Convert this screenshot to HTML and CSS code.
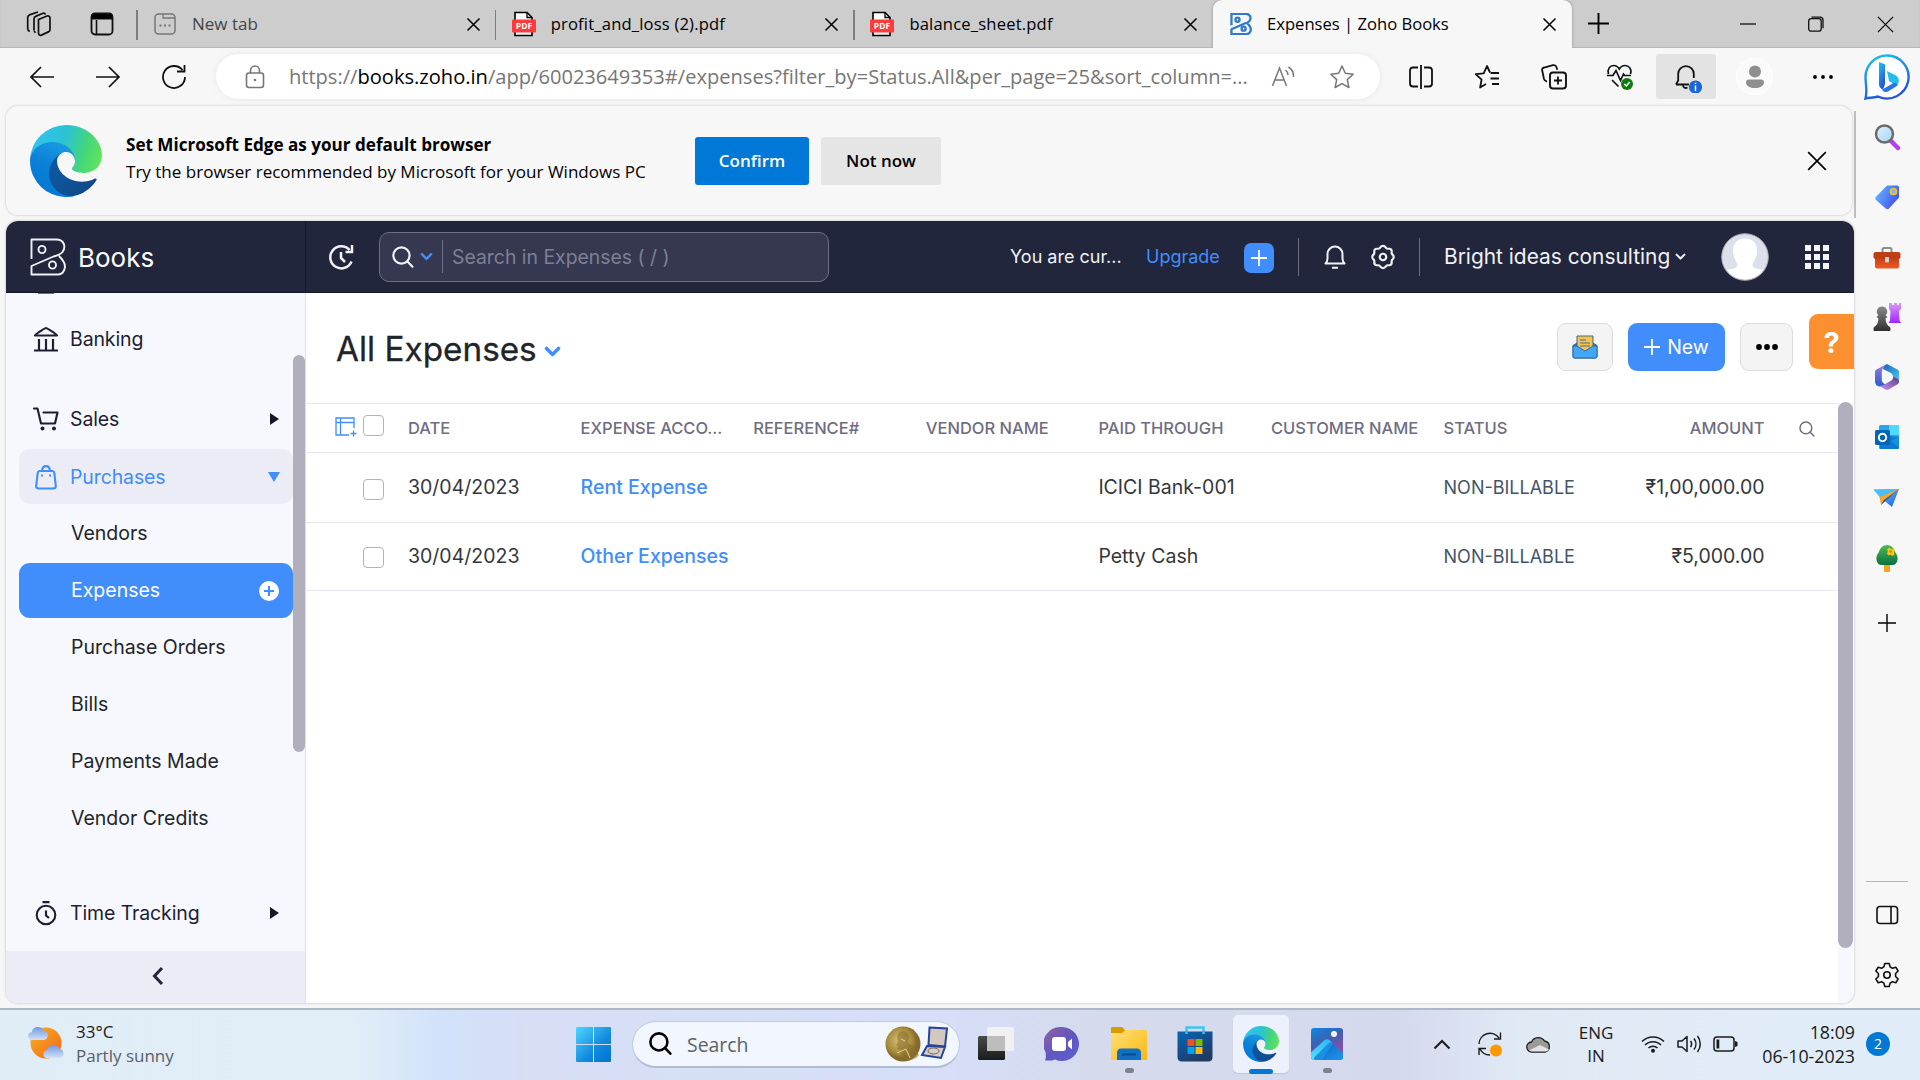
FILE: index.html
```html
<!DOCTYPE html>
<html lang="en">
<head>
<meta charset="utf-8">
<title>Expenses | Zoho Books</title>
<link rel="stylesheet" href="styles.css">
</head>
<body>
<svg class="sprite" width="0" height="0" aria-hidden="true">
  <defs>
    <linearGradient id="edgeDark" x1="0.2" y1="0" x2="1" y2="0.5"><stop offset="0" stop-color="#0c59a4"/><stop offset="1" stop-color="#114a8b"/></linearGradient>
    <linearGradient id="edgeBlue" x1="0.6" y1="0" x2="0.2" y2="1"><stop offset="0" stop-color="#1b9de2"/><stop offset=".5" stop-color="#0b7fd6"/><stop offset="1" stop-color="#0078d4"/></linearGradient>
    <linearGradient id="edgeTop" x1="0" y1="0.4" x2="1" y2="0.6"><stop offset="0" stop-color="#35c1f1"/><stop offset=".45" stop-color="#2bc3d2"/><stop offset=".75" stop-color="#44d57c"/><stop offset="1" stop-color="#60e45c"/></linearGradient>
    <linearGradient id="win" x1="0" y1="0" x2="1" y2="1"><stop offset="0" stop-color="#50d6ff"/><stop offset=".6" stop-color="#118adf"/><stop offset="1" stop-color="#0073d0"/></linearGradient>
    <linearGradient id="bing" x1="0" y1="0" x2=".4" y2="1"><stop offset="0" stop-color="#1fc4f4"/><stop offset="1" stop-color="#2355d8"/></linearGradient>
    <linearGradient id="tagG" x1="0" y1="0.3" x2="1" y2="0.8"><stop offset="0" stop-color="#66b5fb"/><stop offset="1" stop-color="#3d45f5"/></linearGradient>
    <linearGradient id="box" x1="0" y1="0" x2="0" y2="1"><stop offset="0" stop-color="#c43d12"/><stop offset="1" stop-color="#ee5a24"/></linearGradient>
    <linearGradient id="pawn" x1="0" y1="0" x2="0" y2="1"><stop offset="0" stop-color="#8a8a8a"/><stop offset="1" stop-color="#2f2f2f"/></linearGradient>
    <linearGradient id="rook" x1="0" y1="0" x2="0" y2="1"><stop offset="0" stop-color="#d39bf7"/><stop offset="1" stop-color="#a621ff"/></linearGradient>
    <linearGradient id="mA" x1="0" y1="0" x2="0" y2="1"><stop offset="0" stop-color="#9d7be0"/><stop offset="1" stop-color="#2a5fc8"/></linearGradient>
    <linearGradient id="mB" x1="0" y1="0" x2="1" y2="1"><stop offset="0" stop-color="#1b63b8"/><stop offset="1" stop-color="#4cc9f2"/></linearGradient>
    <linearGradient id="mC" x1="0" y1="1" x2="1" y2="0"><stop offset="0" stop-color="#cf96ec"/><stop offset="1" stop-color="#5b3790"/></linearGradient>
    <linearGradient id="plane" x1="0" y1="0" x2="1" y2="1"><stop offset="0" stop-color="#56c7f8"/><stop offset="1" stop-color="#2467e0"/></linearGradient>
    <linearGradient id="leaf" x1="0" y1="0" x2="0" y2="1"><stop offset="0" stop-color="#4dbb4f"/><stop offset="1" stop-color="#0b6f43"/></linearGradient>
    <linearGradient id="sun" x1="0" y1="0" x2="1" y2="1"><stop offset="0" stop-color="#f0b32c"/><stop offset="1" stop-color="#f8640c"/></linearGradient>
    <linearGradient id="cloud" x1="0" y1="0" x2="0" y2="1"><stop offset="0" stop-color="#6f97e0"/><stop offset="1" stop-color="#d3e1f7"/></linearGradient>
    <linearGradient id="chat" x1="0" y1="0" x2="1" y2="1"><stop offset="0" stop-color="#93629f"/><stop offset=".5" stop-color="#6257c0"/><stop offset="1" stop-color="#5a5fd8"/></linearGradient>
    <linearGradient id="folder" x1="0" y1="0" x2="1" y2="1"><stop offset="0" stop-color="#ffe07a"/><stop offset="1" stop-color="#fbb80f"/></linearGradient>
    <linearGradient id="store" x1="0" y1="0" x2=".6" y2="1"><stop offset="0" stop-color="#0966b9"/><stop offset="1" stop-color="#1f3a63"/></linearGradient>
    <linearGradient id="photo" x1=".2" y1="0" x2=".6" y2=".8"><stop offset="0" stop-color="#1183da"/><stop offset=".5" stop-color="#3f5fb2"/><stop offset="1" stop-color="#8a4fa5"/></linearGradient>
    <linearGradient id="hill" x1="0" y1="1" x2="1" y2="0"><stop offset="0" stop-color="#4fe0ff"/><stop offset="1" stop-color="#29b4f2"/></linearGradient>
    <linearGradient id="slope" x1="0" y1="0" x2="1" y2="1"><stop offset="0" stop-color="#0a5fb8"/><stop offset="1" stop-color="#1c98f0"/></linearGradient>
    <linearGradient id="dark" x1="0" y1="0" x2="0" y2="1"><stop offset="0" stop-color="#4a4a4a"/><stop offset="1" stop-color="#1b1b1b"/></linearGradient>
    <radialGradient id="gold" cx=".4" cy=".4"><stop offset="0" stop-color="#d9c27b"/><stop offset=".7" stop-color="#a98c3d"/><stop offset="1" stop-color="#86692a"/></radialGradient>
    <linearGradient id="lens" x1="0" y1="0" x2="1" y2="1"><stop offset="0" stop-color="#e6f4fc"/><stop offset="1" stop-color="#9fd2f3"/></linearGradient>
  </defs>
  <symbol id="edge" viewBox="0 0 256 256">
    <path fill="url(#edgeDark)" d="M231 190.5c-3.4 1.8-6.9 3.4-10.5 4.7a101.8 101.8 0 01-35.9 6.4c-47.3 0-88.5-32.5-88.5-74.3.1-11.4 6.4-21.9 16.4-27.3-42.8 1.8-53.8 46.4-53.8 72.5 0 74 68.1 81.4 82.8 81.4 7.9 0 19.8-2.3 27-4.6l1.3-.4a128.3 128.3 0 0066.6-52.8 4 4 0 00-5.4-5.6z"/>
    <path fill="url(#edgeBlue)" d="M105.7 241.4a79.2 79.2 0 01-22.7-21.3 80.7 80.7 0 0129.5-120c3.2-1.5 8.5-4.1 15.6-4a32.4 32.4 0 0125.7 13 31.9 31.9 0 016.3 18.7c0-.2 24.5-79.6-80-79.6-43.9 0-80 41.6-80 78.2a130.2 130.2 0 0012.1 56 128 128 0 00156.4 67 75.5 75.5 0 01-62.8-8z"/>
    <path fill="url(#edgeTop)" d="M152.3 148.9c-.9 1-3.4 2.5-3.4 5.6 0 2.6 1.7 5.2 4.8 7.3 14.3 10 41.4 8.6 41.5 8.6a59.6 59.6 0 0030.3-8.3 61.4 61.4 0 0030.4-52.9c.3-22.4-8-37.3-11.3-43.9C223.5 23.9 177.7 0 128 0A128 128 0 000 126.2c.5-36.5 36.8-66 80-66 3.5 0 23.5.3 42 10a72.6 72.6 0 0130.9 29.3c6.1 10.6 7.2 24.1 7.2 29.5s-2.7 13.3-7.8 19.9z"/>
  </symbol>
  <symbol id="x" viewBox="0 0 20 20"><path d="M2 2l16 16M18 2L2 18" fill="none" stroke="currentColor"/></symbol>
  <symbol id="plus" viewBox="0 0 20 20"><path d="M10 0v20M0 10h20" fill="none" stroke="currentColor"/></symbol>
  <symbol id="chev" viewBox="0 0 14 10"><path d="M2 2l5 5 5-5" fill="none" stroke="currentColor" stroke-linecap="round" stroke-linejoin="round"/></symbol>
  <symbol id="mag" viewBox="0 0 20 20"><circle cx="8.6" cy="8.6" r="7.4" fill="none" stroke="currentColor"/><path d="M14 14l4.6 4.8" fill="none" stroke="currentColor" stroke-linecap="round"/></symbol>
  <symbol id="zb" viewBox="0 0 36 38"><path d="M1.5 21V1.5h25c7 0 10 6.500 6 12.500-2 2.500-5 3.500-9 4.500L1.500 28v8.500h26c7 0 9-8 6-13-1.200-2.200-2.600-3.700-4.500-5.500" fill="none" stroke="currentColor" stroke-linejoin="round"/><ellipse cx="12" cy="11.500" rx="3.500" ry="3.600" fill="none" stroke="currentColor"/><ellipse cx="22.500" cy="27" rx="3.500" ry="3.600" fill="none" stroke="currentColor"/></symbol>
  <symbol id="gearz" viewBox="0 0 24 24"><path d="M12 1.800c1.800 0 2.200 1 3 2s2 .4 3.200.6c1.600.4 2 1.600 1.800 3-.2 1.200 0 1.800 1 2.600 1.200 1.100 1.200 2.900 0 4-1 .8-1.200 1.400-1 2.600.2 1.400-.2 2.600-1.800 3-1.200.2-2.400-.4-3.200.6s-1.200 2-3 2-2.200-1-3-2-2-.4-3.200-.6c-1.600-.4-2-1.600-1.800-3 .2-1.200 0-1.800-1-2.600-1.200-1.100-1.200-2.900 0-4 1-.8 1.200-1.400 1-2.600-.2-1.400.2-2.600 1.800-3C7 4.200 8.200 4.800 9 3.800s1.200-2 3-2z" fill="none" stroke="currentColor" stroke-linejoin="round"/><circle cx="12" cy="12" r="3" fill="none" stroke="currentColor"/></symbol>
  <symbol id="cloudS" viewBox="0 0 24 18"><path d="M5 17a4.500 4.500 0 01-.6-9 7 7 0 0113.400-1.600A5.400 5.400 0 0118.500 17z" fill="url(#cloud)"/></symbol>
</svg>

<header class="tabs">
  <div class="tabs-lead">
    <svg width="26" height="26" viewBox="0 0 26 26" class="line"><path d="M12.500 8.500l8.500-3.500c1.500-.5 3 .3 3 2v11.500c0 1-.6 2-1.600 2.400l-7 3.200c-1.500.6-2.900-.3-2.900-2zM8 19.500V8c0-1.200.6-2.200 1.700-2.600L17 2.300M3.800 20.500C2.300 20 1.700 19 1.700 17.600V6.400c0-1.200.6-2 1.700-2.500L12 1M8 20l1.500 1.800M17 2.300c1.200-.3 2 .2 2.500 1.200" stroke-width="1.700"/></svg>
    <svg width="24" height="24" viewBox="0 0 24 24" class="line"><rect x="1.500" y="1.500" width="21" height="21" rx="3.500" stroke-width="1.800"/><path d="M2 2h20v5H2z" fill="#000"/><path d="M6.500 8v14" stroke-width="1.600"/></svg>
  </div>
  <div class="tab tab-muted">
    <svg width="22" height="22" viewBox="0 0 22 22" class="line"><rect x="1" y="1" width="20" height="20" rx="3.500" stroke-width="1.500"/><path d="M9 1v4h12" stroke-width="1.300"/><path d="M5.500 12.500h2m2.500 0h2m2.500 0h2" stroke-width="2"/></svg>
    <span class="tab-title">New tab</span><svg class="tab-x" width="15" height="15"><use href="#x"/></svg>
  </div>
  <div class="tab tab-file"><svg width="24" height="26" viewBox="0 0 24 26"><path d="M3 1.500h12l5 5v18H3z" fill="#fff" stroke="#000" stroke-width="1.600"/><path d="M15 1.500v5h5" fill="none" stroke="#000" stroke-width="1.300"/><rect y="8.500" width="24" height="13" rx="1" fill="#ff3b3b"/><text x="12" y="18.200" class="pdf-label">PDF</text></svg><span class="tab-title">profit_and_loss (2).pdf</span><svg class="tab-x" width="15" height="15"><use href="#x"/></svg></div>
  <div class="tab tab-file"><svg width="24" height="26" viewBox="0 0 24 26"><path d="M3 1.500h12l5 5v18H3z" fill="#fff" stroke="#000" stroke-width="1.600"/><path d="M15 1.500v5h5" fill="none" stroke="#000" stroke-width="1.300"/><rect y="8.500" width="24" height="13" rx="1" fill="#ff3b3b"/><text x="12" y="18.200" class="pdf-label">PDF</text></svg><span class="tab-title">balance_sheet.pdf</span><svg class="tab-x" width="15" height="15"><use href="#x"/></svg></div>
  <div class="tab tab-active"><svg width="22" height="22" class="zb-blue"><use href="#zb"/></svg><span class="tab-title">Expenses | Zoho Books</span><svg class="tab-x" width="15" height="15"><use href="#x"/></svg></div>
  <svg class="tab-new" width="21" height="21"><use href="#plus"/></svg>
  <div class="win-controls">
    <svg width="16" height="16" viewBox="0 0 16 16" class="line"><path d="M0 8h16" stroke-width="1.300"/></svg>
    <svg width="16" height="16" viewBox="0 0 16 16" class="line"><rect x=".7" y="2.700" width="12.500" height="12.500" rx="2.500" stroke-width="1.300"/><path d="M3.500 1.200h8.500c1.800 0 3 1.200 3 3v8" stroke-width="1.300"/></svg>
    <svg width="19" height="19" class="thin"><use href="#x"/></svg>
  </div>
</header>

<nav class="toolbar">
  <div class="cell"><svg width="26" height="24" viewBox="0 0 26 24" class="line"><path d="M25 12H2M12 2L2 12l10 10" stroke-width="1.700"/></svg></div>
  <div class="cell"><svg width="26" height="24" viewBox="0 0 26 24" class="line"><path d="M1 12h23M14 2l10 10-10 10" stroke-width="1.700"/></svg></div>
  <div class="cell cell-refresh"><svg width="26" height="26" viewBox="0 0 26 26" class="line"><path d="M24 13A11 11 0 1 1 21.500 6M23.500 1v6.500H16" stroke-width="1.800"/></svg></div>
  <div class="address">
    <svg width="20" height="24" viewBox="0 0 20 24" class="line grey"><rect x="1.500" y="8" width="17" height="14.500" rx="2.500" stroke-width="1.600"/><path d="M5.500 8V5.500a4.500 4.500 0 019 0V8" stroke-width="1.600"/><circle cx="10" cy="15" r="1.300" fill="#767676" stroke="none"/></svg>
    <span class="url">https://<b>books.zoho.in</b>/app/60023649353#/expenses?filter_by=Status.All&amp;per_page=25&amp;sort_column=...</span>
    <svg class="read" width="25" height="24" viewBox="0 0 25 24"><path d="M1.500 21L8.500 3l7 18M4 15h9M14.500 5a6 6 0 012.500 5M17.500 2a11 11 0 015 10" fill="none" stroke="#767676" stroke-width="1.500"/></svg>
    <svg width="26" height="26" viewBox="0 0 26 26" class="line grey"><path d="M13 2l3.300 7.300 7.900.9-5.900 5.400 1.600 7.900L13 19.600l-6.900 3.900 1.600-7.900-5.900-5.400 7.900-.9z" stroke-width="1.500" stroke-linejoin="round"/></svg>
  </div>
  <div class="cell"><svg width="26" height="26" viewBox="0 0 26 26" class="line"><path d="M10 3.500H5C3 3.500 2 4.500 2 6.500v13c0 2 1 3 3 3h5M16 3.500h5c2 0 3 1 3 3v13c0 2-1 3-3 3h-5M13 1v24" stroke-width="1.800"/></svg></div>
  <div class="cell"><svg width="26" height="26" viewBox="0 0 26 26" class="line"><path d="M16 8.500L13 2 9.700 9.300l-8 .9 5.900 5.400-1.500 7.900L12 20M16.500 9H25M16.500 14.500H25M18 20h7" stroke-width="1.800" stroke-linejoin="round"/></svg></div>
  <div class="cell"><svg width="26" height="26" viewBox="0 0 26 26" class="line"><rect x="9" y="8.500" width="16" height="16" rx="3" stroke-width="1.900"/><path d="M17 12.500v8M13 16.500h8M6 17.500c-2-.3-2.500-1-3-2.500L1.200 6.500c-.4-1.500.5-2.700 2-3L12 1.200c1.500-.3 3 .3 3.500 2l.8 2.500" stroke-width="1.800"/></svg></div>
  <div class="cell"><svg width="28" height="28" viewBox="0 0 28 28" class="line"><path d="M2.500 11C1 6 4 2.500 7.500 2.500c2.500 0 4.500 1.200 5.800 3.500 1.300-2.300 3.300-3.500 5.800-3.500C23 2.500 26 6 24.500 11M1 12.500h6l3-5 4.500 10 3-6.500 1.200 1.500H25M6 17l6.500 6.500" stroke-width="1.700"/><circle cx="21" cy="21" r="6" fill="#0f7b0f" stroke="none"/><path d="M18.300 21l2 2 3.500-4" stroke="#fff" stroke-width="1.500"/></svg></div>
  <div class="cell cell-on"><svg width="30" height="30" viewBox="0 0 30 30" class="line"><path d="M3 21.500l2.200-4V11a7.800 7.800 0 0115.600 0v4M3 21.500h13M10 22c0 3 2.500 3.500 4.500 2.500" stroke-width="1.800"/><circle cx="22.500" cy="24" r="6.600" fill="#1a66d4" stroke="none"/><path d="M22.500 22.500v5.500M22.500 19.800v1.300" stroke="#fff" stroke-width="1.500"/></svg></div>
  <div class="cell cell-wide"><span class="profile"><svg width="20" height="24" viewBox="0 0 20 24"><circle cx="10" cy="6.500" r="6" fill="#8f8f8f"/><path d="M4 14.500h12a3 3 0 013 3c0 3.500-4 5.500-9 5.500s-9-2-9-5.500a3 3 0 013-3z" fill="#8f8f8f"/></svg></span></div>
  <div class="cell cell-wide"><svg width="22" height="6" viewBox="0 0 22 6"><circle cx="3" cy="3" r="1.900"/><circle cx="11" cy="3" r="1.900"/><circle cx="19" cy="3" r="1.900"/></svg></div>
  <div class="cell bing"><svg width="46" height="46" viewBox="0 0 46 46"><path d="M23 1.500a21.500 21.500 0 11-9 41C9 44 5 43.500 1.500 44.500 3.500 37 1.500 30 1.500 23A21.500 21.500 0 0123 1.500z" fill="#fff" stroke="url(#bing)" stroke-width="2.400"/><path d="M15 8l6 2.500V30l-2 5.500c-2.500-1-4-2.500-4-5.500z" fill="url(#bing)"/><path d="M23 17l9 4.500c4 3 3.500 8 0 11l-9 5c-2 1-4 .5-5-1.500l11-6.500-4-2.500z" fill="#1fc0ea"/><path d="M18.500 35.500l12-7 3.500 2.500-10 6.500c-2 1-4 .5-5.500-2z" fill="#2b74e6"/></svg></div>
</nav>

<div class="workspace">
  <div class="page">
    <section class="infobar">
      <svg width="72" height="72"><use href="#edge"/></svg>
      <div class="info-text"><strong>Set Microsoft Edge as your default browser</strong><span>Try the browser recommended by Microsoft for your Windows PC</span></div>
      <button class="btn-confirm"><span>Confirm</span></button><button class="btn-later"><span>Not now</span></button>
      <svg class="info-x" width="22" height="22"><use href="#x"/></svg>
    </section>

    <main class="app">
      <div class="app-bar">
        <div class="brand"><svg width="36" height="38"><use href="#zb"/></svg><span>Books</span></div>
        <svg class="history" width="26" height="26" viewBox="0 0 26 26"><path d="M23.500 17.500A11 11 0 1 1 21.500 6M24 1v7h-6.500M13 8v6l4 4" fill="none" stroke="currentColor" stroke-width="2.500"/></svg>
        <div class="search">
          <svg width="22" height="22" class="s-mag"><use href="#mag"/></svg><svg width="13" height="10" class="s-chev"><use href="#chev"/></svg>
          <span class="search-hint">Search in Expenses ( / )</span>
        </div>
        <span class="trial">You are cur...</span><a class="upgrade">Upgrade</a>
        <span class="quick-add"><svg width="16" height="16"><use href="#plus"/></svg></span>
        <i class="rule rule-a"></i>
        <svg class="bell" width="22" height="26" viewBox="0 0 22 26"><path d="M1.500 19.500c1.500-1.500 2-3 2-5V10a7.500 7.500 0 0115 0v4.500c0 2 .5 3.500 2 5zM8 23.800h6" fill="none" stroke="currentColor" stroke-width="2" stroke-linejoin="round"/></svg>
        <svg class="gear" width="26" height="26"><use href="#gearz"/></svg>
        <i class="rule rule-b"></i>
        <span class="org">Bright ideas consulting</span><svg class="org-chev" width="11" height="8"><use href="#chev"/></svg>
        <svg class="avatar" width="48" height="48" viewBox="0 0 48 48"><circle cx="24" cy="24" r="23.300" fill="#dde0ec" stroke="#a9a9a9"/><path d="M24 5.500c8 0 12 5 12 12.500 0 6-2.500 9-4 12-1 3 0 5 3 5.500 3.500.6 5 .8 7 1.500A22.500 22.500 0 0124 46.500 22.500 22.500 0 016 37c2-.7 3.500-.9 7-1.500 3-.5 4-2.500 3-5.500-1.500-3-4-6-4-12 0-7.500 4-12.500 12-12.500z" fill="#fff"/></svg>
        <svg class="apps" width="24" height="24" viewBox="0 0 24 24"><path d="M0 0h6v6H0zM9 0h6v6H9zM18 0h6v6h-6zM0 9h6v6H0zM9 9h6v6H9zM18 9h6v6h-6zM0 18h6v6H0zM9 18h6v6H9zM18 18h6v6h-6z" fill="#f4f4f6"/></svg>
      </div>

      <div class="app-body">
        <aside class="side">
          <div class="side-list">
            <i class="side-cut"></i>
            <div class="item banking"><svg width="26" height="26" viewBox="0 0 26 26"><path d="M2 9.500c0-1 10-7.500 11-7.500s11 6.500 11 7.500zM1 24.500h24M6 13v11M13 13v11M20 13v11" fill="none" stroke="currentColor" stroke-width="2.200" stroke-linejoin="round"/></svg><span>Banking</span></div>
            <div class="item sales"><svg width="26" height="24" viewBox="0 0 26 24"><path d="M1 1.500h3.500L8 16.500h14l2.500-11H10.500" fill="none" stroke="currentColor" stroke-width="2.100" stroke-linejoin="round" stroke-linecap="round"/><circle cx="9.500" cy="21.500" r="2"/><circle cx="21" cy="21.500" r="2"/></svg><span>Sales</span><i class="tri"></i></div>
            <div class="item purchases"><svg width="24" height="26" viewBox="0 0 24 26"><path d="M5.500 7h13c1.300 0 1.600 1 1.800 2l1.500 13c.1 1.500-.8 2.500-2.300 2.500h-15C3 24.500 2.100 23.500 2.200 22L3.700 9c.2-1 .5-2 1.800-2zM8 7c.5-6.500 7.500-6.500 8 0" fill="none" stroke="currentColor" stroke-width="2.100"/><path d="M8 10.500v2M16 10.500v2" stroke="currentColor" stroke-width="2"/></svg><span>Purchases</span><i class="tri tri-down"></i></div>
            <div class="sub">Vendors</div>
            <div class="sub sub-on"><span>Expenses</span><svg width="20" height="20" viewBox="0 0 20 20"><circle cx="10" cy="10" r="10" fill="#fff"/><path d="M10 5v10M5 10h10" stroke="#408dfb" stroke-width="2"/></svg></div>
            <div class="sub">Purchase Orders</div>
            <div class="sub">Bills</div>
            <div class="sub">Payments Made</div>
            <div class="sub">Vendor Credits</div>
            <div class="item time"><svg width="24" height="26" viewBox="0 0 24 26"><circle cx="12" cy="15" r="9.300" fill="none" stroke="currentColor" stroke-width="2.100"/><path d="M8.500 2.200h7M12 10.500v5l3 2.500" fill="none" stroke="currentColor" stroke-width="2.200"/></svg><span>Time Tracking</span><i class="tri"></i></div>
          </div>
          <i class="side-thumb"></i>
          <div class="side-foot"><svg width="12" height="20" viewBox="0 0 12 20"><path d="M10 2L2.500 10l7.500 8" fill="none" stroke="currentColor" stroke-width="3"/></svg></div>
        </aside>

        <section class="content">
          <div class="head">
            <h1>All Expenses</h1><svg class="h-chev" width="17" height="12"><use href="#chev"/></svg>
            <span class="hbtn inbox"><svg width="26" height="24" viewBox="0 0 26 24"><path d="M1 10.500l4-2.500h16l4 2.500v11c0 1-.6 1.500-1.500 1.500h-21C1.600 23 1 22.500 1 21.500z" fill="#2f86cf" stroke="#24618f" stroke-width=".9"/><path d="M5 1h16v12l-8 4-8-4z" fill="#f8c24b" stroke="#24618f" stroke-width=".9"/><path d="M8 5h6M8 8h10M8 11h10" stroke="#7c8a8c" stroke-width="1.300"/><path d="M1 11h4l8 5 8-5h4v10.500c0 1-.6 1.500-1.500 1.500h-21C1.600 23 1 22.500 1 21.500z" fill="#43a7f7" stroke="#24618f" stroke-width=".9"/></svg></span>
            <span class="hbtn new"><svg width="16" height="16"><use href="#plus"/></svg>New</span>
            <span class="hbtn more"><svg width="22" height="6" viewBox="0 0 22 6"><circle cx="3" cy="3" r="2.900"/><circle cx="11" cy="3" r="2.900"/><circle cx="19" cy="3" r="2.900"/></svg></span>
            <span class="help">?</span>
          </div>
          <div class="scroll">
            <div class="table">
              <div class="row row-head">
                <span class="pick"><svg width="22" height="20" viewBox="0 0 22 20"><path d="M14 18H1V1h18v10M1 5.500h18M5.500 1v17M18.500 13.500v6M15.500 16.500h6" fill="none" stroke="#408dfb" stroke-width="1.300"/></svg><i class="check"></i></span>
                <span>DATE</span><span>EXPENSE ACCO...</span><span>REFERENCE#</span><span>VENDOR NAME</span><span>PAID THROUGH</span><span>CUSTOMER NAME</span>
                <span>STATUS</span><span class="num">AMOUNT</span><svg width="16" height="16" class="th-mag"><use href="#mag"/></svg>
              </div>
              <div class="row row-a"><span class="pick"><i class="check"></i></span><span>30/04/2023</span><a>Rent Expense</a><span></span><span></span><span class="thru">ICICI Bank-001</span><span></span><span class="state">NON-BILLABLE</span><span class="num">₹1,00,000.00</span></div>
              <div class="row row-b"><span class="pick"><i class="check"></i></span><span>30/04/2023</span><a>Other Expenses</a><span></span><span></span><span class="thru">Petty Cash</span><span></span><span class="state">NON-BILLABLE</span><span class="num">₹5,000.00</span></div>
            </div>
            <div class="track"><i></i></div>
          </div>
        </section>
      </div>
    </main>
  </div>

  <aside class="edge-side">
    <svg viewBox="0 0 30 30"><path d="M19 19l7 7" stroke="#b43df5" stroke-width="4.500" stroke-linecap="round"/><circle cx="12.500" cy="12" r="8.500" fill="url(#lens)" stroke="#6b6b6b" stroke-width="2.500"/></svg>
    <svg viewBox="0 0 30 30"><path d="M15 3.500h10c1.500 0 2 .8 2 2v10L17 26.500c-1 1-2.300 1-3.300 0L4 18c-1-1-1-2.300 0-3.300z" fill="url(#tagG)"/><circle cx="21.500" cy="9.500" r="3" fill="#7fb2ff" stroke="#f7c30d" stroke-width="1.700"/></svg>
    <svg viewBox="0 0 30 30"><path d="M10.500 10V7.500c0-1 .7-1.500 1.500-1.500h6c.8 0 1.500.5 1.500 1.500V10" fill="none" stroke="#8d8d8d" stroke-width="2"/><rect x="3" y="15" width="24" height="11.500" rx="2" fill="url(#box)"/><rect x="1.500" y="10" width="27" height="7" rx="2" fill="#bd3f15"/><rect x="13" y="15" width="4" height="5.500" rx="1" fill="#cfd4da"/></svg>
    <svg viewBox="0 0 30 30"><path d="M17 1h3v2h2V1h3v2h2V1h2v6l-2 2 .5 9.500 1.500 2.500H16.500l1.500-2.500.5-9.500-1.500-2z" fill="url(#rook)"/><path d="M10 4.500a5 5 0 013.500 8.700l2 1.800-2 1.500c.3 3 .9 5.500 3 7.500 2 1 2 1.500 2 3.500 0 1-.6 1.500-1.500 1.500H3c-.9 0-1.500-.5-1.500-1.500 0-2 0-2.500 2-3.500 2.100-2 2.700-4.500 3-7.500l-2-1.500 2-1.800A5 5 0 0110 4.500z" fill="url(#pawn)"/></svg>
    <svg viewBox="0 0 30 30"><path d="M15 2L4.500 7.500C3.500 8 3 9 3 10v9.500c0 4 4.500 6 7.500 4.500l3-1.500c-3.500-2-3.700-3-3.700-6.500V10C9.800 6.500 12 4 15 2z" fill="url(#mA)"/><path d="M15 2l10.500 5.500C26.500 8 27 9 27 10v9.500L21 15c0-2-1-3.500-3-4.500L11 7c.5-2.500 2-4 4-5z" fill="url(#mB)"/><path d="M27 19.500c0 1.500-.5 2-1.500 2.800L17 27.200c-1.500.8-2.500.8-4 0l-6-3.400c2 .3 3.500 0 5-1l7-4c1.500-1 2-2 2-3.800 4 1 6 2 6 4.500z" fill="url(#mC)"/><path d="M15 10.500l4.300 2.300v4.600L15 19.700l-4.300-2.300v-4.600z" fill="#f7f7f7"/></svg>
    <svg viewBox="0 0 30 30"><rect x="7" y="3" width="20" height="24" rx="1.500" fill="#28a8ea"/><path d="M17 3h8.500c.8 0 1.500.6 1.500 1.500V13H17z" fill="#50d9ff"/><path d="M8 13l19 2v10.500c0 .8-.7 1.500-1.500 1.500H8z" fill="#0f78d4"/><path d="M19 19l8-4.500v11z" fill="#1490df"/><rect x="3" y="8" width="15" height="15" rx="1.500" fill="#0364b8"/><circle cx="10.500" cy="15.500" r="3.700" fill="none" stroke="#fff" stroke-width="2"/></svg>
    <svg viewBox="0 0 30 30"><path d="M1.500 6.500L27 6 20 24l-5-4z" fill="url(#plane)"/><path d="M1.500 6.500L27 6 8.500 15z" fill="#4abdf5"/><path d="M27 6L9 22l-1.500-8z" fill="#f4a62a"/><path d="M27 6L12 17l-3 5 4-3.500z" fill="#1b55c0"/></svg>
    <svg viewBox="0 0 30 30"><rect x="12" y="20" width="6" height="9" rx="1" fill="#f2a41b"/><path d="M15 2c4 0 7 3 8 7 2 2 3 5 2.500 8-.4 3-2.500 5-5.500 5H10c-3 0-5.100-2-5.500-5C4 14 5 11 7 9c1-4 4-7 8-7z" fill="url(#leaf)"/><path d="M17.500 4.500l2 2 2-1 1.500 2-1 2 .5 2-2 1.500-2-1.500-2 1-1.500-2 1-2-1-2z" fill="#fbc60e"/><circle cx="18.500" cy="8.500" r="1.200" fill="#e07b0b"/></svg>
    <svg class="edge-plus" viewBox="0 0 30 30"><path d="M15 6v18M6 15h18" stroke="#000" stroke-width="1.400"/></svg>
    <div class="edge-foot">
      <svg viewBox="0 0 30 30" class="line"><rect x="5" y="6.500" width="20.500" height="17" rx="3" stroke-width="1.600"/><path d="M19 6.500v17" stroke-width="1.600"/></svg>
      <svg viewBox="0 0 30 30" class="line"><path d="M12.800 3.500h4.400l.9 3.400 2.300 1.300 3.400-1 2.300 3.800-2.500 2.500v3l2.500 2.500-2.300 3.800-3.400-1-2.300 1.300-.9 3.400h-4.400l-.9-3.400-2.300-1.300-3.400 1L3.900 19l2.500-2.500v-3L3.900 11l2.300-3.800 3.400 1 2.300-1.300z" stroke-width="1.600" stroke-linejoin="round"/><circle cx="15" cy="15" r="3.200" stroke-width="1.600"/></svg>
    </div>
  </aside>
</div>

<footer class="taskbar">
  <div class="weather">
    <div class="weather-icon"><svg width="38" height="36" viewBox="0 0 38 36"><circle cx="18" cy="18" r="15.500" fill="url(#sun)"/><svg x="0" y="0" width="21" height="16"><use href="#cloudS"/></svg><svg x="15" y="18" width="22" height="16"><use href="#cloudS"/></svg></svg></div>
    <div class="weather-text"><span>33°C</span><small>Partly sunny</small></div>
  </div>
  <svg class="start" width="35" height="35" viewBox="0 0 35 35"><path d="M0 1.500C0 .5.500 0 1.500 0H17v17H0zM18 0h15.500c1 0 1.500.5 1.500 1.500V17H18zM0 18h17v17H1.500C.5 35 0 34.500 0 33.500zM18 18h17v15.500c0 1-.5 1.500-1.500 1.500H18z" fill="url(#win)"/></svg>
  <div class="task-search">
    <svg width="23" height="23"><use href="#mag"/></svg><span>Search</span>
    <svg width="64" height="36" viewBox="0 0 64 36"><circle cx="18" cy="18" r="17.500" fill="url(#gold)"/><path d="M15 6c5-2 9 1 9 5l-1 6 5 3 6 9c-3 4-9 6-14 6l-3-6-1-5-4-1 1-3-2-1 2-3c-1-4-1-8 2-10z" fill="#8a6f2c" opacity=".6"/><path d="M12 27l9-4 4 9M16 13l4 2" stroke="#e3d193" fill="none"/><path d="M44.500 1.500l17.500 1-2 18-16.500-1.500z" fill="#d4c7bd" stroke="#23449a" stroke-width="2"/><path d="M42 20l18 1-4 11-19-3z" fill="#d5cdc9" stroke="#23449a" stroke-width="2"/><ellipse cx="48.500" cy="25" rx="5.500" ry="3" fill="none" stroke="#77665c"/></svg>
  </div>
  <div class="task-apps">
    <div class="app-slot"><svg width="36" height="36" viewBox="0 0 36 36"><rect x="0" y="10" width="27" height="24" rx="1.500" fill="url(#dark)"/><rect x="9" y="1" width="27" height="24" rx="1.500" fill="#f1f1f1"/><path d="M9 10h18v15H10a1 1 0 01-1-1z" fill="#bdbdbd"/></svg></div>
    <div class="app-slot"><svg width="36" height="36" viewBox="0 0 36 36"><path d="M18 1a17 17 0 11-7 32.500C8 35 4 34.500 1 34.500c1.500-3 .5-6 .7-8A17 17 0 0118 1z" fill="url(#chat)"/><rect x="8" y="11" width="14" height="14" rx="3" fill="#fff"/><path d="M24 16l4-3.500v11L24 20z" fill="#fff"/></svg></div>
    <div class="app-slot has-dot"><svg width="36" height="36" viewBox="0 0 36 36"><path d="M0 2.500C0 1.500.6 1 1.500 1H11l4 4-3 3H0z" fill="#d99a06"/><path d="M0 7h11l3.500-3H34.500c1 0 1.500.5 1.500 1.500V34H0z" fill="url(#folder)"/><path d="M6 34v-7c0-3 1.500-4.500 4-4.500h16c2.500 0 4 1.500 4 4.500v7z" fill="#0f6fc2"/><path d="M11 28.500h14" stroke="#0a4a8c" stroke-width="2"/></svg></div>
    <div class="app-slot"><svg width="36" height="36" viewBox="0 0 36 36"><path d="M9.500 8V1.500h17V8" fill="none" stroke="#39c5f5" stroke-width="2.400"/><path d="M.5 5.500h35V31c0 3-1.500 4.500-4.500 4.500H5C2 35.500.5 34 .5 31z" fill="url(#store)"/><path d="M9.500 5.500V8M26.500 5.500V8" stroke="#39c5f5" stroke-width="2.400"/><path d="M10.500 13h7v7h-7z" fill="#f25022"/><path d="M18.500 13h7v7h-7z" fill="#7fba00"/><path d="M10.500 21h7v7h-7z" fill="#00a4ef"/><path d="M18.500 21h7v7h-7z" fill="#ffb900"/></svg></div>
    <div class="app-slot app-on"><svg width="36" height="36"><use href="#edge"/></svg></div>
    <div class="app-slot has-dot"><svg width="32" height="32" viewBox="0 0 32 32"><rect width="32" height="32" rx="3" fill="url(#photo)"/><path d="M16 15l3-2.500L32 25v4c0 2-1 3-3 3H5z" fill="url(#slope)"/><path d="M0 24.500L13 12.500c2-1.700 4-1.700 6 0l3 2.500c-1.500-.8-3-.5-4.500.8L4 29c-1 1.200-.8 2.500 0 3H3c-2 0-3-1-3-3z" fill="url(#hill)"/><path d="M22 15c-1.500-.8-3-.5-4.500.8L3 30c.5 1.500 2 2 4 2h4z" fill="#1a8fe6"/><circle cx="23" cy="6" r="3" fill="#f4f4f8"/></svg></div>
  </div>
  <div class="tray">
    <svg class="t-up" width="18" height="11" viewBox="0 0 18 11"><path d="M1.500 9.500L9 2l7.500 7.500" fill="none" stroke="#1b1b1b" stroke-width="2"/></svg>
    <svg class="t-sync" width="26" height="26" viewBox="0 0 26 26"><path d="M2 13A11 11 0 0122 7M23.500 1.500V8H17M13 24a11 11 0 01-10-6M2 24v-6.500h7" fill="none" stroke="#1b1b1b" stroke-width="1.400"/><circle cx="19" cy="19.500" r="6" fill="#ff9800"/></svg>
    <svg class="t-cloud" width="25" height="18" viewBox="0 0 25 18"><path d="M6 17a5 5 0 01-.5-10 7.500 7.500 0 0113-1A5.600 5.600 0 0119 17z" fill="#9a9a9a" stroke="#1b1b1b" stroke-width="1.300"/><path d="M3 15.500l11-5.500 9 4.500c-1 1.500-2.500 2-4 2H6c-1 0-2-.3-3-1z" fill="#e3e3e3"/></svg>
    <div class="lang"><span>ENG</span><span>IN</span></div>
    <svg class="t-wifi" width="24" height="18" viewBox="0 0 24 18"><path d="M1 6.500a15.500 15.500 0 0122 0M4 10a11.300 11.300 0 0116 0M7.500 13a6.500 6.500 0 019 0" fill="none" stroke="#1b1b1b" stroke-width="1.500"/><circle cx="12" cy="15.800" r="2" fill="#1b1b1b"/></svg>
    <svg class="t-vol" width="25" height="20" viewBox="0 0 25 20"><path d="M1 7h4l5-4.500v15L5 13H1zM13.500 7a5 5 0 010 6M17 4.500a9 9 0 010 11M20.500 2a13 13 0 010 16" fill="none" stroke="#1b1b1b" stroke-width="1.500" stroke-linejoin="round"/></svg>
    <svg class="t-bat" width="25" height="16" viewBox="0 0 25 16"><rect x="1" y="1" width="20" height="14" rx="3" fill="none" stroke="#1b1b1b" stroke-width="1.500"/><rect x="3.500" y="3.500" width="2.800" height="9" fill="#1b1b1b"/><path d="M22 5l2.500 1v4L22 11z" fill="#1b1b1b"/></svg>
    <div class="clock"><span>18:09</span><span>06-10-2023</span></div>
    <span class="badge">2</span>
  </div>
</footer>
</body>
</html>
```
FILE: styles.css
```css
* { box-sizing: border-box; }
body {
  margin: 0; width: 1920px; height: 1080px; overflow: hidden;
  display: flex; flex-direction: column;
  background: #f7f7f7; color: #000;
  font-family: "Open Sans", "Noto Sans", sans-serif;
}
svg { display: block; flex: none; }
span, a, strong { white-space: nowrap; }
button { border: 0; padding: 0; font: inherit; }
.sprite { position: absolute; }
.line { fill: none; stroke: #111; }
.line.grey { stroke: #767676; }
.pdf-label { font: 700 8.500px "Open Sans", sans-serif; fill: #fff; text-anchor: middle; }

/* Browser tab strip */
.tabs { height: 48px; flex: none; display: flex; background: #cdcdcd; box-shadow: inset 0 -1px 1px #b6b6b6; }
.tabs-lead { width: 137px; display: flex; align-items: center; padding: 0 0 1px 26px; gap: 38px; }
.tab { width: 358.700px; height: 48px; display: flex; align-items: center; padding: 0 15px 0 16px; position: relative; }
.tab::before { content: ""; position: absolute; left: -1px; top: 10px; width: 1.500px; height: 30px; background: #7d7d7d; }
.tab-title { margin-left: 15px; font-size: 16.600px; line-height: 24px; }
.tab-file .tab-title { letter-spacing: 0.170px; }
.tab-x { margin-left: auto; stroke-width: 2; }
.tab-muted { color: #454545; }
.tab-muted .tab-title { font-size: 17px; margin-left: 16px; }
.tab-muted .line { stroke: #777; margin-left: 1px; }
.tab-muted .tab-x { color: #000; }
.tab-active { background: #f7f7f7; border-radius: 9px 9px 0 0; box-shadow: 0 0 3px #8e8e8e; clip-path: inset(0 -4px 0 -4px); }
.tab-active::before { display: none; }
.zb-blue { color: #2f7bc4; stroke-width: 4; margin-left: 1px; }
.tab-new { margin: 13px 0 0 16px; stroke-width: 1.800; }
.win-controls { margin-left: auto; display: flex; align-items: center; gap: 52px; padding-right: 25px; }
.thin { stroke-width: 1.300; }

/* Toolbar */
.toolbar { height: 58px; flex: none; display: flex; padding: 6px 0 0 9px; }
.cell { width: 66.300px; height: 45px; display: flex; align-items: center; justify-content: center; }
.cell-refresh { padding-right: 2px; }
.cell-wide { width: 68.500px; padding-left: 3px; }
.cell-on { width: 60px; margin: 0 3px; background: #e3e3e3; border-radius: 3px; }
.cell-on svg { margin: 3px 0 0 4px; }
.address { width: 1164px; height: 45px; margin: 0 8px 0 8px; padding: 0 25px 0 29px; display: flex; align-items: center; border-radius: 23px; background: #fff; box-shadow: 0 0 6px #e6e6e6; }
.url { margin-left: 24px; width: 961px; font-size: 20.100px; color: #767676; }
.url b { color: #000; font-weight: 400; }
.read { margin: 0 33px 0 22px; }
.profile { width: 35px; height: 35px; border-radius: 50%; background: #fafafa; box-shadow: 0 0 1px 1px #fff; display: grid; place-items: center; }
.bing { width: 60px; padding-left: 2px; }

/* Page frame and Edge sidebar */
.workspace { height: 902px; display: flex; flex: none; }
.page { width: 1854px; display: flex; flex-direction: column; padding-left: 6px; }
.infobar { height: 109px; flex: none; margin-right: 2px; padding: 0 24px 0 24px; display: flex; align-items: center; border-radius: 12px; background: #f7f7f7; box-shadow: 0 0 2px 1px #dcdcdc; }
.info-text { width: 569px; margin: -5px 0 0 24px; display: flex; flex-direction: column; font-size: 17.050px; line-height: 27px; }
.info-text strong { font-weight: 700; font-size: 17.100px; }
.btn-confirm, .btn-later { height: 48px; border-radius: 3px; font-weight: 600; font-size: 17px; }
.btn-confirm { width: 114px; margin-right: 12px; background: #0078d7; color: #fff; }
.btn-later { width: 120px; background: #e5e5e5; color: #000; }
.info-x { margin-left: auto; stroke-width: 1.500; }

.edge-side { width: 66px; display: flex; flex-direction: column; align-items: center; padding-top: 16px; position: relative; }
.edge-side::before { content: ""; position: absolute; left: 0; top: 5px; width: 2px; height: 107px; background: #bdbdbd; }
.edge-side svg { width: 30px; height: 30px; margin-bottom: 30.100px; }
.edge-side .edge-plus { margin-top: 5px; }
.edge-foot { width: 42px; margin-top: auto; margin-bottom: 18px; padding-top: 18px; border-top: 1px solid #b5b5b5; display: flex; flex-direction: column; align-items: center; gap: 30px; }
.edge-foot svg { margin: 0; }

/* Zoho Books */
.app { height: 782px; margin-top: 6px; border-radius: 12px; overflow: hidden; background: #fff; font-family: Inter, sans-serif; box-shadow: 0 0 2px 1px #d9d9dc; color: #21263c; }
.app-bar { height: 72px; display: flex; align-items: center; background: #21263c; border-bottom: 1px solid #151827; color: #f1f1f4; }
.brand { width: 300px; height: 71px; padding: 0 0 0 24px; display: flex; align-items: center; gap: 12px; border-right: 1px solid #171a2a; }
.brand svg { stroke-width: 1.900; }
.brand span { font-size: 26px; color: #fff; padding-top: 1px; }
.history { margin-left: 22px; }
.search { width: 450px; height: 50px; margin-left: 25px; padding-left: 12px; display: flex; align-items: center; border: 1px solid #6c6f83; border-radius: 10px; background: #353850; }
.s-mag { stroke-width: 2; }
.s-chev { margin-left: 6px; color: #408dfb; stroke-width: 2.600; }
.search-hint { height: 33px; line-height: 34px; margin-left: 9px; padding-left: 9px; border-left: 1px solid #6c6f83; font-size: 19.400px; color: #7d8094; }
.trial { width: 112px; margin-left: 181px; font-size: 18px; }
.upgrade { width: 75px; margin-left: 24px; font-size: 18px; color: #408dfb; }
.quick-add { width: 30px; height: 30px; margin: 2px 0 0 23px; border-radius: 7px; background: #408dfb; display: grid; place-items: center; color: #fff; stroke-width: 2.200; }
.rule { width: 1px; height: 38px; background: #6c6f83; }
.rule-a { margin-left: 24px; }
.bell { margin-left: 25px; }
.gear { margin-left: 24px; stroke-width: 2; }
.rule-b { margin-left: 23px; }
.org { width: 228px; margin-left: 24px; font-size: 20.900px; }
.org-chev { margin-left: 3px; stroke-width: 2.600; }
.avatar { margin-left: 35px; }
.apps { margin-left: 36px; }

.app-body { height: 710px; display: flex; }
.side { width: 300px; position: relative; background: #f7f8fe; border-right: 1px solid #dfe0e8; font-size: 19.500px; display: flex; flex-direction: column; }
.side-list { flex: 1; position: relative; }
.side-cut { display: block; width: 16px; height: 1px; margin-left: 32px; background: #6d7083; }
.item { height: 55px; margin: 0 13px; padding: 0 13px 0 14px; display: flex; align-items: center; gap: 11px; color: #1c1f33; fill: #1c1f33; letter-spacing: -0.120px; }
.banking { margin-top: 17px; }
.sales { margin-top: 25px; }
.purchases { margin-top: 3px; margin-right: 12px; background: #ececf6; border-radius: 11px; color: #408dfb; }
.purchases svg { margin: 0 1px; }
.tri { margin-left: auto; border: 6px solid transparent; border-left: 9px solid #14172a; border-right: 0; }
.purchases .tri { border: 6px solid transparent; border-top: 10px solid #408dfb; border-bottom: 0; }
.sub { height: 55px; margin: 2px 12px 1.700px 13px; padding: 0 0 2px 52px; display: flex; align-items: center; color: #212529; }
.sub-on { background: #408dfb; color: #fff; border-radius: 11px; padding: 0 14px 0 52px; justify-content: space-between; }
.sub-on span { margin-top: -2px; }
.time { margin-top: 39px; }
.time svg { margin: 0 1px; }
.side-thumb { position: absolute; right: 0; top: 62px; width: 12px; height: 397px; border-radius: 6px; background: #b1afbd; }
.side-foot { height: 52px; display: flex; align-items: center; justify-content: center; padding: 0 0 2px 4px; background: #ececf6; }

.content { flex: 1; display: flex; flex-direction: column; min-width: 0; }
.head { height: 110px; flex: none; display: flex; align-items: center; padding: 0 0 3px 30px; color: #212529; }
h1 { margin: 5px 0 0; font-size: 33.300px; font-weight: 400; -webkit-text-stroke: .3px #212529; line-height: 40px; white-space: nowrap; }
.h-chev { margin: 11px 0 0 7px; color: #408dfb; stroke-width: 2.900; }
.hbtn { height: 48px; border: 1px solid #dcdce0; border-radius: 9px; background: #f4f4f4; display: flex; align-items: center; justify-content: center; }
.inbox { width: 56px; margin-left: auto; }
.new { width: 97px; margin-left: 15px; gap: 7px; background: #408dfb; border: 0; color: #fff; font-size: 19.500px; stroke-width: 2.200; }
.more { width: 53px; margin-left: 15px; }
.help { width: 45px; height: 55px; margin: -11px 0 0 16px; border-radius: 9px 0 0 9px; background: #fc8f30; color: #fff; font: 700 29px/57px Inter, sans-serif; text-align: center; }
.scroll { flex: 1; display: flex; padding-right: 1px; }
.table { flex: 1; }
.row { display: grid; grid-template-columns: 102px repeat(6, 172.600px) 220px 101px 1fr; align-items: center; border-bottom: 1px solid #e7e8ef; font-size: 19.500px; color: #33373d; }
.row-head { height: 50px; border-top: 1px solid #e7e8ef; font-size: 16.500px; font-weight: 500; color: #6f6d82; }
.row-a { height: 70px; }
.row-b { height: 68px; }
.row-a > span:not(.pick), .row-a > a, .row-b > span:not(.pick), .row-b > a { margin-top: -2px; }
.row a { color: #408dfb; font-weight: 500; }
.row > .state.state { font-size: 18px; color: #44546a; margin-top: 0; }
.num { justify-self: end; }
.th-mag { margin: 1px 0 0 34px; stroke-width: 1.800; }
.pick { display: flex; justify-content: flex-end; align-items: center; gap: 6px; padding: 2px 24px 0 0; }
.row-a .pick { padding-top: 3px; }
.row-head .pick { padding: 0 24px 2px 0; }
.check { width: 21px; height: 21px; border: 1px solid #b4b4b8; border-radius: 4px; background: #fff; }
.row-head .check { margin-top: -3px; }
.track { width: 15px; background: #f7f8fe; }
.track i { display: block; height: 546px; margin-top: -1px; border-radius: 8px; background: #b1afbd; }

/* Windows taskbar */
.taskbar { height: 72px; flex: none; display: flex; align-items: center; padding-bottom: 2px; border-top: 2px solid #adb7c5; background: linear-gradient(90deg, #e0ecf6 0, #e2eef7 350px, #d2e2fa 440px, #d7def6 530px, #d5e0f6 720px, #d6def8 950px, #d5dbec 1100px, #d5d9ee 1400px, #e0eaf5 1520px, #e0edf9 1920px); font-size: 17px; }
.weather { width: 576px; display: flex; padding-left: 28px; gap: 10px; }
.weather-text { display: flex; flex-direction: column; line-height: 24px; color: #1b1b1b; margin-top: -1px; }
.weather-icon { padding-top: 4px; }
.weather small { font-size: 17px; color: #5a5f66; }
.task-search { width: 328px; height: 47px; margin-left: 21px; padding: 0 10px 0 16px; display: flex; align-items: center; border: 1px solid #c0cbdf; border-bottom: 2px solid #b0bccf; border-radius: 24px; background: #f2f6fe; }
.task-search > svg:first-child { stroke-width: 2.200; }
.task-search span { flex: 1; margin: 1px 0 0 15px; font-size: 19.400px; color: #5d6168; }
.task-apps { display: flex; margin-left: 8px; gap: 10.300px; }
.app-slot { width: 56px; height: 58px; display: grid; place-items: center; position: relative; border-radius: 5px; }
.app-on { background: #edf1fb; box-shadow: 0 1px 1px #bcc5d8; }
.has-dot::after, .app-on::after { content: ""; position: absolute; left: 50%; bottom: 0; width: 9px; height: 5px; margin-left: -4px; border-radius: 3px; background: #7e828c; }
.app-on::after { width: 24px; margin-left: -12px; background: #0078d4; bottom: -1px; }
.tray { margin-left: auto; display: flex; align-items: center; padding-right: 30px; color: #1b1b1b; }
.t-sync { margin-left: 26px; }
.t-cloud { margin-left: 23px; }
.lang, .clock { display: flex; flex-direction: column; line-height: 24px; margin-top: -1px; }
.lang { width: 46px; margin-left: 22px; align-items: center; }
.lang span:first-child { margin-top: 1px; margin-bottom: -1px; }
.t-wifi { margin-left: 22px; }
.t-vol { margin-left: 12px; }
.t-bat { margin-left: 11px; }
.clock { width: 117px; align-items: flex-end; font-size: 17.800px; }
.badge { width: 24px; height: 24px; margin-left: 11px; border-radius: 50%; background: #0078d4; color: #fff; font-size: 14px; line-height: 23px; text-align: center; }
```
